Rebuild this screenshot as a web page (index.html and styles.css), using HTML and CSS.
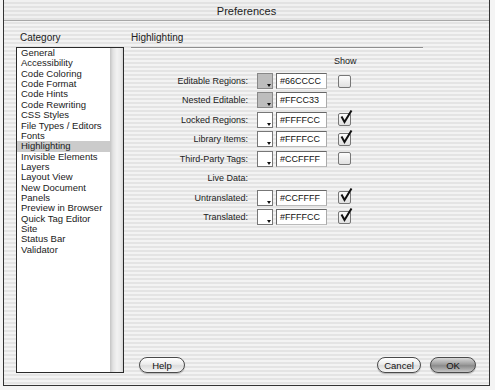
FILE: index.html
```html
<!DOCTYPE html>
<html>
<head>
<meta charset="utf-8">
<link rel="stylesheet" href="styles.css">
</head>
<body>
<div class="window">
  <div class="titlebar">Preferences</div>
  <div class="main">
    <div class="left">
      <div class="heading cat">Category</div>
      <div class="listbox">
        <ul class="items">
          <li>General</li>
          <li>Accessibility</li>
          <li>Code Coloring</li>
          <li>Code Format</li>
          <li>Code Hints</li>
          <li>Code Rewriting</li>
          <li>CSS Styles</li>
          <li>File Types / Editors</li>
          <li>Fonts</li>
          <li class="sel">Highlighting</li>
          <li>Invisible Elements</li>
          <li>Layers</li>
          <li>Layout View</li>
          <li>New Document</li>
          <li>Panels</li>
          <li>Preview in Browser</li>
          <li>Quick Tag Editor</li>
          <li>Site</li>
          <li>Status Bar</li>
          <li>Validator</li>
        </ul>
        <div class="track"></div>
      </div>
    </div>
    <div class="right">
      <div class="heading">Highlighting</div>
      <div class="rule"></div>
      <div class="showhead">Show</div>
      <div class="rows">
        <div class="row">
          <span class="lbl">Editable Regions:</span>
          <span class="swatch gray"><i></i></span>
          <span class="field">#66CCCC</span>
          <span class="check"></span>
        </div>
        <div class="row">
          <span class="lbl">Nested Editable:</span>
          <span class="swatch gray"><i></i></span>
          <span class="field">#FFCC33</span>
          <span class="nocheck"></span>
        </div>
        <div class="row">
          <span class="lbl">Locked Regions:</span>
          <span class="swatch"><i></i></span>
          <span class="field">#FFFFCC</span>
          <span class="check on"><svg viewBox="0 0 14 14" width="14" height="14"><path d="M2.5 6.5 L5.5 12 L12.5 0.5" fill="none" stroke="#111" stroke-width="2"/></svg></span>
        </div>
        <div class="row">
          <span class="lbl">Library Items:</span>
          <span class="swatch"><i></i></span>
          <span class="field">#FFFFCC</span>
          <span class="check on"><svg viewBox="0 0 14 14" width="14" height="14"><path d="M2.5 6.5 L5.5 12 L12.5 0.5" fill="none" stroke="#111" stroke-width="2"/></svg></span>
        </div>
        <div class="row">
          <span class="lbl">Third-Party Tags:</span>
          <span class="swatch"><i></i></span>
          <span class="field">#CCFFFF</span>
          <span class="check"></span>
        </div>
        <div class="row">
          <span class="lbl">Live Data:</span>
        </div>
        <div class="row">
          <span class="lbl">Untranslated:</span>
          <span class="swatch"><i></i></span>
          <span class="field">#CCFFFF</span>
          <span class="check on"><svg viewBox="0 0 14 14" width="14" height="14"><path d="M2.5 6.5 L5.5 12 L12.5 0.5" fill="none" stroke="#111" stroke-width="2"/></svg></span>
        </div>
        <div class="row">
          <span class="lbl">Translated:</span>
          <span class="swatch"><i></i></span>
          <span class="field">#FFFFCC</span>
          <span class="check on"><svg viewBox="0 0 14 14" width="14" height="14"><path d="M2.5 6.5 L5.5 12 L12.5 0.5" fill="none" stroke="#111" stroke-width="2"/></svg></span>
        </div>
      </div>
      <div class="buttons">
        <button class="btn help">Help</button>
        <span class="spacer"></span>
        <button class="btn cancel">Cancel</button>
        <button class="btn ok">OK</button>
      </div>
    </div>
  </div>
</div>
</body>
</html>
```
FILE: styles.css
```css
html, body {
  margin: 0;
  padding: 0;
}
body {
  width: 495px;
  height: 390px;
  overflow: hidden;
  font-family: "Liberation Sans", Arial, sans-serif;
  color: #1a1a1a;
  background: #f4f4f4;
}
.window {
  margin-left: 3px;
  width: 485px;
  height: 385px;
  border-left: 1px solid #333;
  border-right: 1px solid #333;
  border-bottom: 1px solid #333;
  background: repeating-linear-gradient(to bottom, #f3f3f3 0px, #f3f3f3 2px, #e4e4e4 2px, #e4e4e4 4px);
  display: flex;
  flex-direction: column;
}
.titlebar {
  height: 20px;
  line-height: 23px;
  text-align: center;
  font-size: 11px;
  color: #222;
  border-bottom: 1px solid #a8a8a8;
  background: repeating-linear-gradient(to bottom, #f0f0f0 0px, #f0f0f0 2px, #e2e2e2 2px, #e2e2e2 4px);
}
.main {
  flex: 1;
  display: flex;
  padding: 11px 0 0 12px;
}
.left {
  width: 108px;
  display: flex;
  flex-direction: column;
}
.heading {
  font-size: 10px;
  height: 15px;
  line-height: 12px;
  color: #222;
}
.cat {
  padding-left: 4px;
}
.listbox {
  height: 324px;
  border: 1px solid #2a2a2a;
  background: #fff;
  display: flex;
}
.items {
  list-style: none;
  margin: 0;
  padding: 0;
  flex: 1;
  font-size: 9.5px;
}
.items li {
  height: 10.37px;
  line-height: 10.5px;
  padding-left: 4px;
  white-space: nowrap;
}
.items li.sel {
  background: #cbcbcb;
}
.track {
  width: 13px;
  background: linear-gradient(to right, #c4c4c4 0px, #e2e2e2 3px, #f2f2f2 7px, #e8e8e8 11px, #d4d4d4 13px);
}
.right {
  margin-left: 7px;
  flex: 1;
  display: flex;
  flex-direction: column;
}
.rule {
  width: 292px;
  height: 1px;
  background: #8e8e8e;
  border-bottom: 1px solid #fafafa;
}
.showhead {
  font-size: 9px;
  margin-top: 7px;
  padding-left: 203px;
  height: 17px;
}
.rows {
  display: flex;
  flex-direction: column;
  gap: 3.45px;
}
.row {
  display: flex;
  align-items: center;
  height: 16px;
  font-size: 9px;
}
.lbl {
  width: 117px;
  text-align: right;
  color: #222;
}
.swatch {
  margin-left: 9px;
  width: 14px;
  height: 14px;
  border: 1px solid #777;
  background: #fff;
  position: relative;
  box-sizing: content-box;
}
.swatch.gray {
  background: #bdbdbd;
  border-color: #888;
}
.swatch i {
  position: absolute;
  right: 1px;
  bottom: 1px;
  width: 0;
  height: 0;
  border-left: 2.5px solid transparent;
  border-right: 2.5px solid transparent;
  border-top: 3px solid #111;
}
.field {
  margin-left: 3px;
  width: 46px;
  height: 14px;
  line-height: 15px;
  padding-left: 3px;
  border: 1px solid #666;
  border-right-color: #aaa;
  border-bottom-color: #bbb;
  background: #fff;
  font-size: 9px;
  color: #111;
}
.check, .nocheck {
  margin-left: 11px;
  width: 11px;
  height: 11px;
  position: relative;
}
.check {
  border: 1px solid #777;
  border-radius: 2px;
  background: linear-gradient(to bottom, #fdfdfd, #e0e0e0);
}
.check svg {
  position: absolute;
  left: 0px;
  top: -4px;
}
.buttons {
  margin-top: auto;
  margin-bottom: 12px;
  display: flex;
  align-items: center;
  padding-left: 8px;
  padding-right: 13px;
}
.spacer {
  flex: 1;
}
.btn {
  font-family: "Liberation Sans", Arial, sans-serif;
  font-size: 9.5px;
  color: #111;
  height: 16px;
  padding: 0;
  border: 1px solid #4a4a4a;
  border-radius: 8px;
  background: linear-gradient(to bottom, #ffffff 0%, #ececec 45%, #dcdcdc 55%, #f6f6f6 100%);
  box-shadow: 0 1px 1px rgba(0,0,0,0.25);
}
.help {
  width: 46px;
}
.cancel {
  width: 44px;
  margin-right: 9px;
}
.ok {
  width: 46px;
  background: linear-gradient(to bottom, #d8d8d8 0%, #9e9e9e 45%, #8a8a8a 55%, #c6c6c6 100%);
}
```
